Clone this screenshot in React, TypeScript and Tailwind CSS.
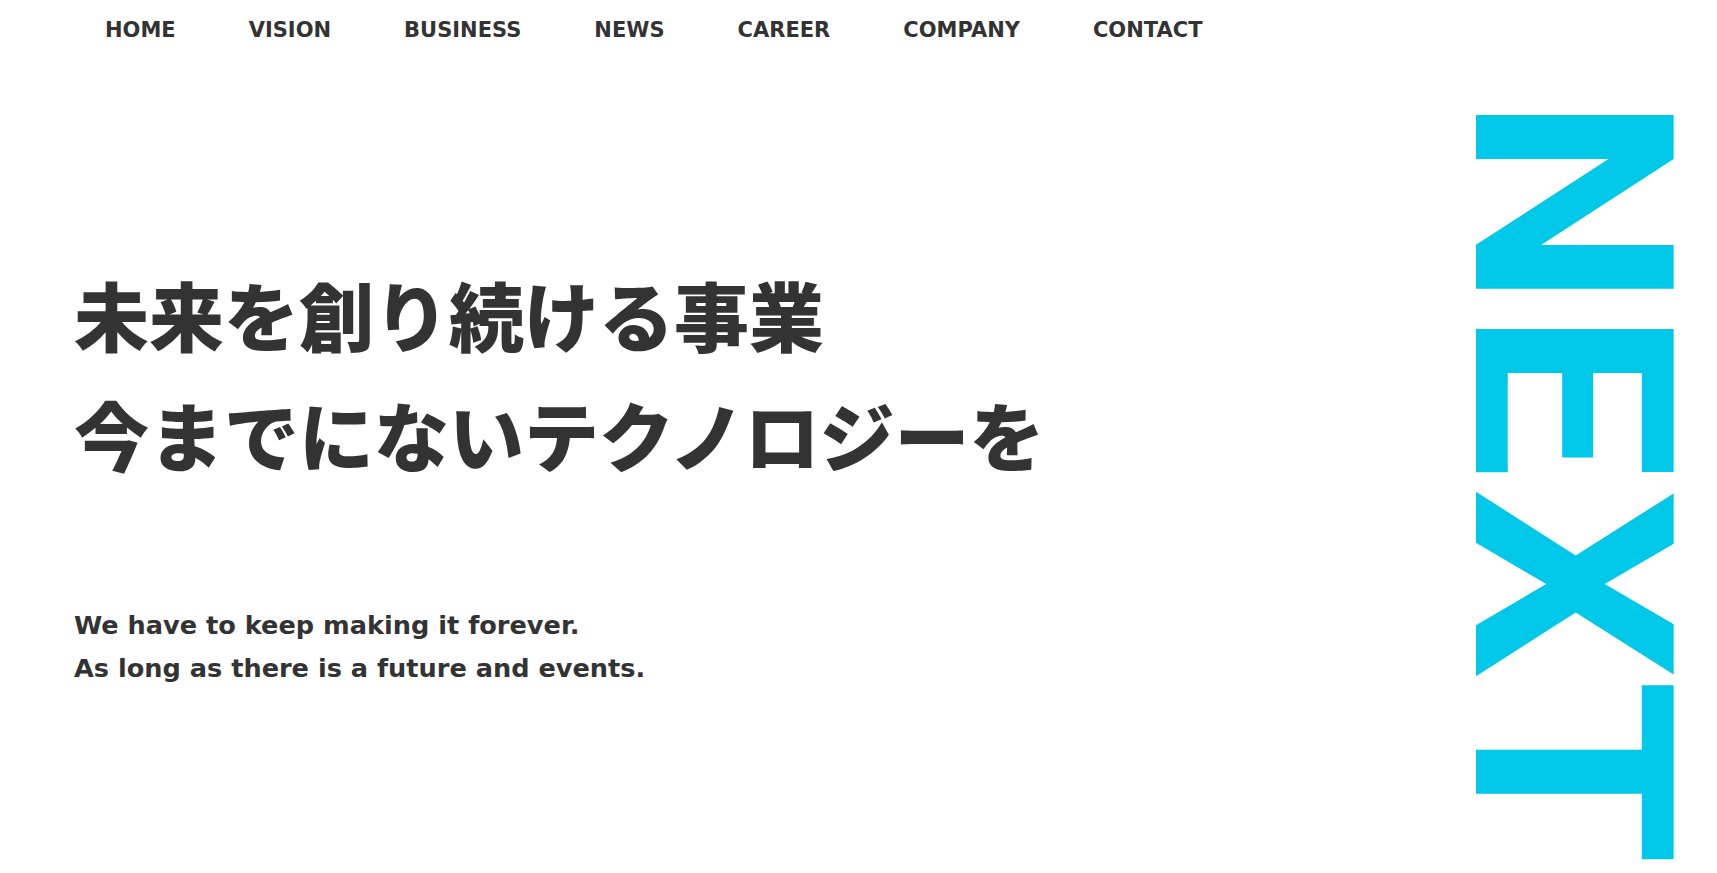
const navItems = ['HOME', 'VISION', 'BUSINESS', 'NEWS', 'CAREER', 'COMPANY', 'CONTACT']

const Header = () => (
  <header className="h-[60px] flex items-center">
    <nav className="flex items-center gap-[73px] pl-[105px]">
      {navItems.map(item => (
        <a key={item} href="#" className="font-['DejaVu_Sans',sans-serif] text-[21px] font-bold text-[#333] leading-none">
          {item}
        </a>
      ))}
    </nav>
  </header>
)

const Hero = () => (
  <section className="flex-1 pl-[74px] pt-[194px]">
    <h1 className="font-['Noto_Sans_CJK_JP',sans-serif] text-[75px] font-black leading-[1.6] text-[#333] m-0">
      未来を創り続ける事業<br />
      今までにないテクノロジーを
    </h1>
    <p className="mt-[110px] font-['DejaVu_Sans',sans-serif] text-[25.6px] font-bold leading-[43px] text-[#333]">
      We have to keep making it forever.<br />
      As long as there is a future and events.
    </p>
  </section>
)

// NEXT: vertical word, slightly stretched along the reading axis
const NextMark = () => (
  <aside className="w-[278px] mr-[7px] mt-[36px] flex justify-end">
    <span className="block origin-top scale-y-[1.08] [writing-mode:vertical-rl] font-['Roboto',sans-serif] text-[278px] font-bold leading-none text-[#00c8e8] select-none">
      <span className="tracking-[2px]">N</span>
      <span className="tracking-[9px]">E</span>
      XT
    </span>
  </aside>
)

const App = () => (
  <div className="bg-white min-h-screen overflow-hidden relative">
    <Header />
    <div className="flex">
      <Hero />
      <NextMark />
    </div>
  </div>
)

export default App
